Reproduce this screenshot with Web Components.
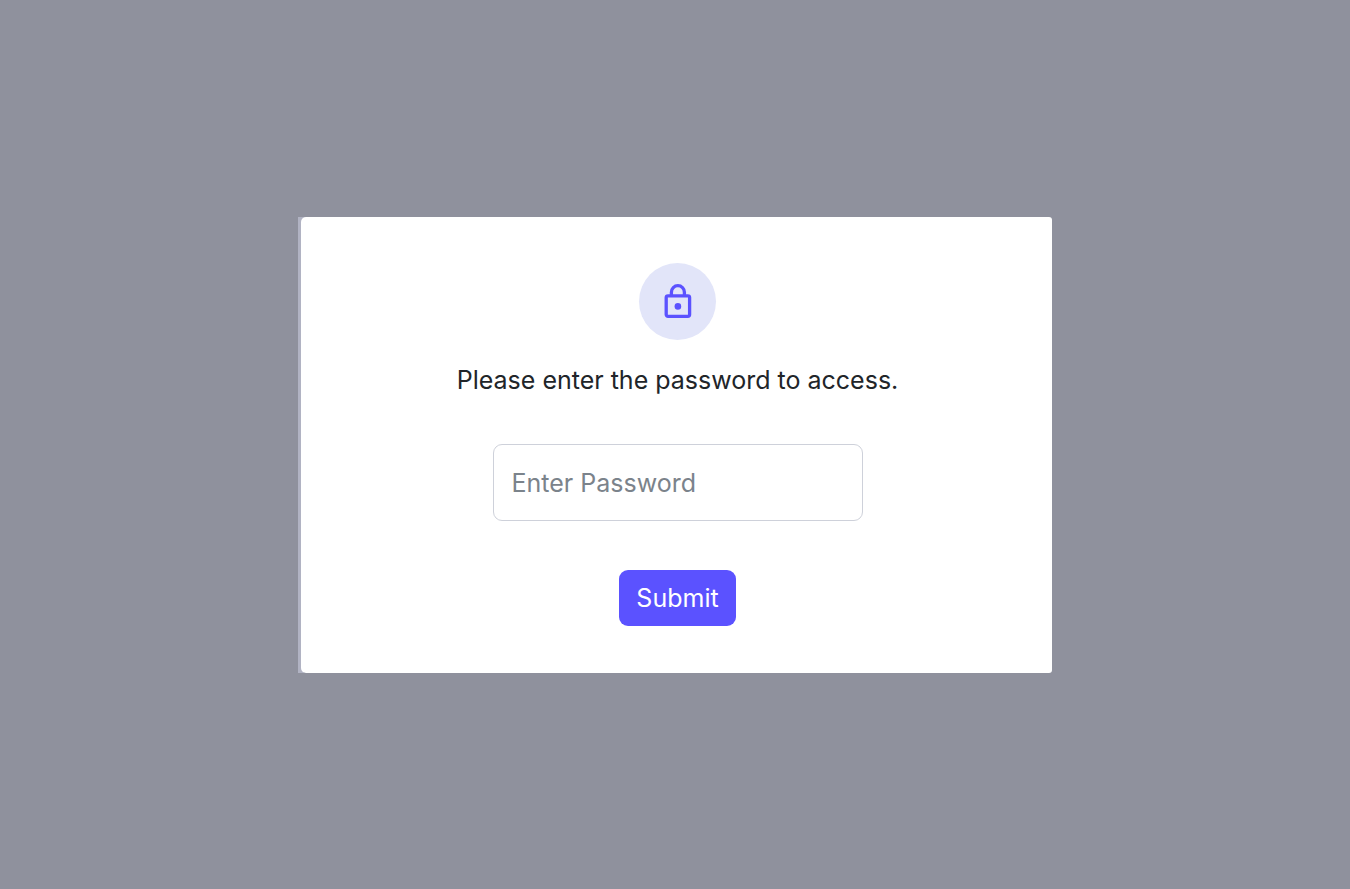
<!DOCTYPE html>
<html lang="en">
<head>
<meta charset="utf-8">
<meta name="viewport" content="width=device-width, initial-scale=1">
<title>Password required</title>
<style>
  body { margin: 0; background: #8f919d; font-family: Inter, "Liberation Sans", sans-serif; font-size: 25px; line-height: 32px; color: #212529; }
</style>
</head>
<body>
<password-page>
  <password-card>
    <lock-badge></lock-badge>
    <password-form>Please enter the password to access.</password-form>
  </password-card>
</password-page>
<script>
const define = (name, html, setup) => customElements.define(name, class extends HTMLElement {
  constructor() {
    super();
    this.attachShadow({ mode: "open" }).innerHTML = html;
    if (setup) setup(this.shadowRoot);
  }
});

define("password-page", `
  <style>
    :host { display: grid; place-items: center; min-height: 100vh; padding: 16px; box-sizing: border-box; }
  </style>
  <slot></slot>`);

define("password-card", `
  <style>
    :host { display: block; width: 100%; max-width: 754px; box-sizing: border-box; padding-left: 3px; background: linear-gradient(90deg, #b1b3c3 6px, transparent 6px); }
    main { display: flex; flex-direction: column; align-items: center; padding: 46px 24px 47px 26px; background: #fff; border-radius: 5px 3px 3px 5px; }
  </style>
  <main><slot></slot></main>`);

define("lock-badge", `
  <style>
    :host { display: grid; place-items: center; width: 77px; height: 77px; border-radius: 50%; background: #e2e5f9; }
    svg { display: block; }
  </style>
  <svg width="40" height="40" viewBox="0 0 40 40" fill="none" stroke="#5b52ff" stroke-width="3.3" aria-hidden="true">
    <rect x="8.2" y="14.8" width="23.4" height="20.6" rx="1.8"/>
    <path d="M13.4 14.8V11.2a6.5 6.5 0 0 1 13 0V14.8"/>
    <circle cx="19.9" cy="25.4" r="3.3" fill="#5b52ff" stroke="none"/>
  </svg>`);

define("password-form", `
  <style>
    :host { display: block; max-width: 100%; }
    form { display: flex; flex-direction: column; align-items: center; margin-top: 24px; }
    label { text-align: center; }
    input, button { font: inherit; box-sizing: border-box; margin: 0; }
    input { width: 370px; max-width: 100%; height: 77px; margin-top: 48px; padding: 2px 18px 0; border: 1px solid #ced1da; border-radius: 9px; background: #fff; color: #212529; }
    input::placeholder { color: #7b838b; opacity: 1; }
    button { margin-top: 49px; padding: 12px 17px; border: 0; border-radius: 9px; background: #5b52ff; color: #fff; cursor: pointer; }
    input:focus-visible, button:focus-visible { outline: 3px solid #b9b5ff; }
  </style>
  <form>
    <label for="password"><slot></slot></label>
    <input id="password" type="password" placeholder="Enter Password" autocomplete="current-password">
    <button type="submit">Submit</button>
  </form>`, root => root.querySelector("form").addEventListener("submit", e => e.preventDefault()));
</script>
</body>
</html>
